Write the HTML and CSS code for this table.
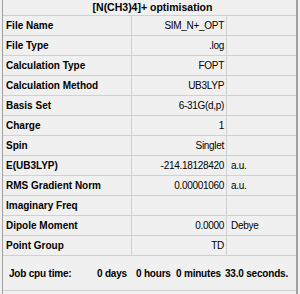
FILE: index.html
```html
<!DOCTYPE html>
<html>
<head>
<meta charset="utf-8">
<link rel="stylesheet" href="styles.css">
</head>
<body>
<div class="panel">
  <div class="title">[N(CH3)4]+ optimisation</div>
  <div class="grid">
    <div class="row"><div class="lab">File Name</div><div class="val">SIM_N+_OPT</div><div class="unit"></div></div>
    <div class="row"><div class="lab">File Type</div><div class="val">.log</div><div class="unit"></div></div>
    <div class="row"><div class="lab">Calculation Type</div><div class="val">FOPT</div><div class="unit"></div></div>
    <div class="row"><div class="lab">Calculation Method</div><div class="val">UB3LYP</div><div class="unit"></div></div>
    <div class="row"><div class="lab">Basis Set</div><div class="val">6-31G(d,p)</div><div class="unit"></div></div>
    <div class="row"><div class="lab">Charge</div><div class="val">1</div><div class="unit"></div></div>
    <div class="row"><div class="lab">Spin</div><div class="val">Singlet</div><div class="unit"></div></div>
    <div class="row"><div class="lab">E(UB3LYP)</div><div class="val">-214.18128420</div><div class="unit">a.u.</div></div>
    <div class="row"><div class="lab">RMS Gradient Norm</div><div class="val">0.00001060</div><div class="unit">a.u.</div></div>
    <div class="row"><div class="lab">Imaginary Freq</div><div class="val"></div><div class="unit"></div></div>
    <div class="row"><div class="lab">Dipole Moment</div><div class="val">0.0000</div><div class="unit">Debye</div></div>
    <div class="row"><div class="lab">Point Group</div><div class="val">TD</div><div class="unit"></div></div>
  </div>
  <div class="job">
    <span class="jl">Job cpu time:</span>
    <span class="jt j1">0 days</span><span class="jt j2">0 hours</span><span class="jt j3">0 minutes</span><span class="jt">33.0 seconds.</span>
  </div>
</div>
</body>
</html>
```
FILE: styles.css
```css
html, body {
  margin: 0;
  padding: 0;
  background: #f0f0f0;
}
body {
  width: 300px;
  height: 294px;
  overflow: hidden;
  font-family: "Liberation Sans", Arial, sans-serif;
  font-size: 10px;
  color: #000;
}
.panel {
  margin-left: 2px;
  width: 293px;
  border-left: 1px solid #a0a0a0;
  border-right: 2px solid #a0a0a0;
  height: 294px;
}
.title {
  height: 15px;
  line-height: 15px;
  border-bottom: 1px solid #d0d0d0;
  text-align: center;
  font-weight: bold;
  font-size: 10.5px;
  padding-left: 6px;
}
.row {
  display: grid;
  grid-template-columns: 129px 95px 1fr;
  height: 19px;
  border-bottom: 1px solid #d0d0d0;
}
.row > div {
  line-height: 20px;
  white-space: nowrap;
}
.lab {
  font-weight: bold;
  font-size: 10px;
  padding-left: 3px;
  border-right: 1px solid #d0d0d0;
}
.val {
  text-align: right;
  padding-right: 2px;
  border-right: 1px solid #d0d0d0;
  letter-spacing: -0.3px;
}
.unit {
  padding-left: 4px;
  letter-spacing: -0.3px;
}
.job {
  height: 34px;
  border-bottom: 1px solid #d0d0d0;
  display: flex;
  align-items: center;
  font-weight: bold;
  font-size: 10px;
  white-space: nowrap;
  letter-spacing: -0.2px;
}
.jl {
  margin-left: 6px;
  width: 88px;
}
.j1 { width: 39px; }
.j2 { width: 40px; }
.j3 { width: 49px; }
```
